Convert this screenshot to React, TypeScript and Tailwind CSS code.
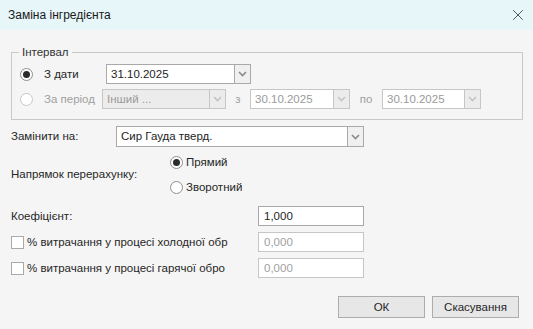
import { X } from "lucide-react";

function Chevron({ disabled }: { disabled?: boolean }) {
  return (
    <svg width="9" height="6" viewBox="0 0 9 6" fill="none">
      <path
        d="M1 1l3.5 3.5L8 1"
        stroke={disabled ? "#c4c4c4" : "#8a8a8a"}
        strokeWidth="1.6"
      />
    </svg>
  );
}

function Radio({ checked, disabled }: { checked?: boolean; disabled?: boolean }) {
  return (
    <span
      className={`flex h-[13px] w-[13px] shrink-0 items-center justify-center rounded-full border bg-white ${
        disabled ? "border-[#c8c8c8]" : "border-[#8f8f8f]"
      }`}
    >
      {checked && <span className="h-[7px] w-[7px] rounded-full bg-[#2b2b2b]" />}
    </span>
  );
}

function Combo({
  value,
  width,
  disabled,
  grey,
}: {
  value: string;
  width: string;
  disabled?: boolean;
  grey?: boolean;
}) {
  return (
    <div
      className={`flex h-[20px] shrink-0 border ${width} ${
        disabled ? "border-[#c6c6c6]" : "border-[#a9a9a9]"
      } ${grey ? "bg-[#ececec]" : "bg-white"}`}
    >
      <span
        className={`flex-1 truncate pl-[4px] leading-[18px] ${
          disabled ? "text-[#9a9a9a]" : "text-[#1e1e1e]"
        }`}
      >
        {value}
      </span>
      <span
        className={`flex w-[16px] items-center justify-center border-l ${
          disabled ? "border-[#c6c6c6] bg-[#ececec]" : "border-[#a9a9a9] bg-[#f0f0f0]"
        }`}
      >
        <Chevron disabled={disabled} />
      </span>
    </div>
  );
}

function TextBox({ value, disabled }: { value: string; disabled?: boolean }) {
  return (
    <div
      className={`h-[20px] w-[106px] border bg-white pl-[5px] leading-[18px] ${
        disabled ? "border-[#c6c6c6] text-[#a0a0a0]" : "border-[#a9a9a9] text-[#1e1e1e]"
      }`}
    >
      {value}
    </div>
  );
}

function CheckRow({ label }: { label: string }) {
  return (
    <div className="flex h-[20px] items-center">
      <span className="h-[13px] w-[13px] shrink-0 border border-[#a9a9a9] bg-white" />
      <span className="ml-[3px] w-[191px] whitespace-nowrap">{label}</span>
      <div className="ml-[40px]">
        <TextBox value="0,000" disabled />
      </div>
    </div>
  );
}

export default function App() {
  return (
    <div
      className="flex h-[329px] w-[533px] flex-col bg-[#f5f5f5] text-[11.5px] text-[#262626]"
      style={{ fontFamily: '"Liberation Sans", Arial, sans-serif' }}
    >
      {/* Title bar */}
      <div className="flex h-[30px] shrink-0 items-center justify-between bg-[#e7f6f8] pl-[8px] pr-[6px]">
        <span className="text-[12px] text-[#1a1a1a]">Заміна інгредієнта</span>
        <X size={18} strokeWidth={1} className="text-[#222]" />
      </div>

      <div className="flex flex-1 flex-col px-[11px]">
        {/* Interval group */}
        <fieldset className="mt-[14px] w-[512px] border border-[#c9c9c9] pb-[10px]">
          <legend className="ml-[7px] px-[3px] text-[#333]">Інтервал</legend>
          <div className="mt-[3px] flex h-[20px] items-center pl-[8px]">
            <Radio checked />
            <span className="ml-[11px] w-[62px]">З дати</span>
            <Combo value="31.10.2025" width="w-[145px]" />
          </div>
          <div className="mt-[5px] flex h-[20px] items-center pl-[8px] text-[#a0a0a0]">
            <Radio disabled />
            <span className="ml-[11px] w-[58px]">За період</span>
            <Combo value="Інший ..." width="w-[124px]" disabled grey />
            <span className="w-[24px] text-center">з</span>
            <Combo value="30.10.2025" width="w-[100px]" disabled />
            <span className="w-[32px] text-center">по</span>
            <Combo value="30.10.2025" width="w-[99px]" disabled />
          </div>
        </fieldset>

        {/* Replace with */}
        <div className="mt-[6px] flex h-[21px] items-center">
          <span className="w-[105px]">Замінити на:</span>
          <Combo value="Сир Гауда тверд." width="w-[248px] h-[21px]" />
        </div>

        {/* Direction */}
        <div className="mt-[7px] flex items-center">
          <span className="w-[159px]">Напрямок перерахунку:</span>
          <div className="flex flex-col gap-[9px]">
            <div className="flex h-[16px] items-center">
              <Radio checked />
              <span className="ml-[3px]">Прямий</span>
            </div>
            <div className="flex h-[16px] items-center">
              <Radio />
              <span className="ml-[3px]">Зворотний</span>
            </div>
          </div>
        </div>

        {/* Coefficient */}
        <div className="mt-[11px] flex h-[20px] items-center">
          <span className="w-[247px]">Коефіцієнт:</span>
          <TextBox value="1,000" />
        </div>
        <div className="mt-[6px] flex flex-col gap-[6px]">
          <CheckRow label="% витрачання у процесі холодної обр" />
          <CheckRow label="% витрачання у процесі гарячої обро" />
        </div>

        {/* Buttons */}
        <div className="mt-[18px] flex justify-end gap-[7px] pr-[3px]">
          <button className="h-[22px] w-[87px] border border-[#adadad] bg-[#e7e7e7] text-[#262626]">
            ОК
          </button>
          <button className="h-[22px] w-[87px] border border-[#adadad] bg-[#e7e7e7] text-[#262626]">
            Скасування
          </button>
        </div>
      </div>
    </div>
  );
}
